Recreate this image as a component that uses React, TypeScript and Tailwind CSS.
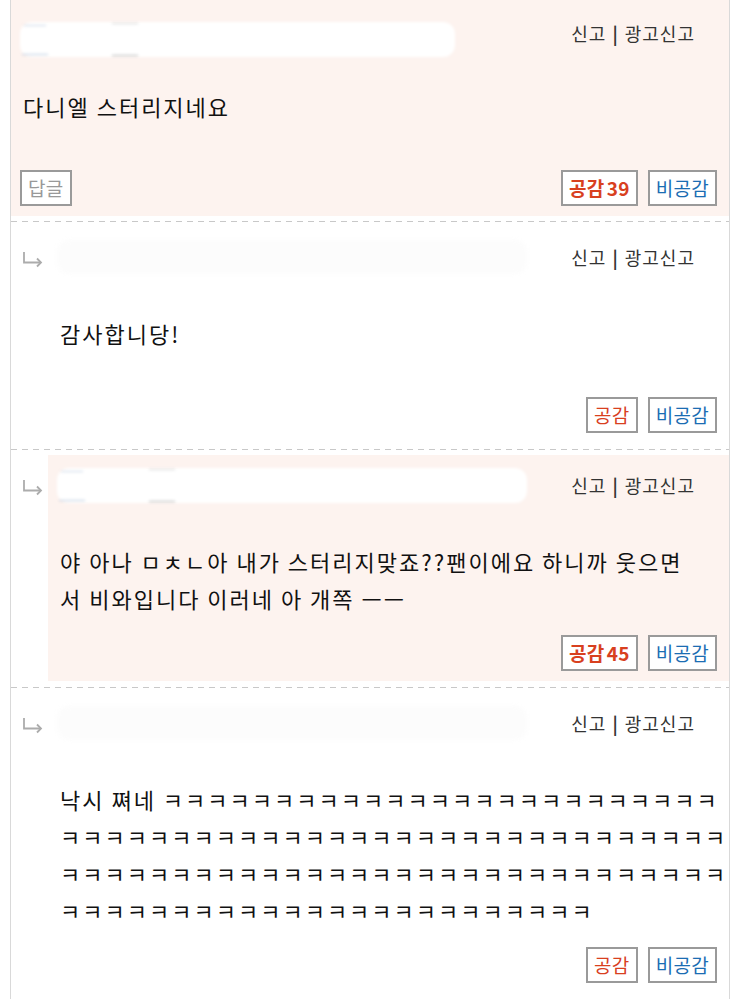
const KK = (n: number) => "ㅋ".repeat(n);

type Comment = {
  reply: boolean;
  hl: boolean;
  lines: string[];
  up?: number;
  blob: "solid" | "faint";
};

const comments: Comment[] = [
  { reply: false, hl: true, lines: ["다니엘 스터리지네요"], up: 39, blob: "solid" },
  { reply: true, hl: false, lines: ["감사합니당!"], blob: "faint" },
  {
    reply: true,
    hl: true,
    lines: ["야 아나 ㅁㅊㄴ아 내가 스터리지맞죠??팬이에요 하니까 웃으면", "서 비와입니다 이러네 아 개쪽 ㅡㅡ"],
    up: 45,
    blob: "solid",
  },
  {
    reply: true,
    hl: false,
    lines: ["낙시 쪄네 " + KK(25), KK(30), KK(30), KK(24)],
    blob: "faint",
  },
];

function ReplyArrow() {
  return (
    <svg width="22" height="17" viewBox="0 0 22 17" fill="none" stroke="#acacac" strokeWidth="1.8">
      <path d="M2 1 V11.5 H19" />
      <path d="M15 7.5 L19 11.5 L15 15.5" />
    </svg>
  );
}

function NameBlob({ kind, width }: { kind: "solid" | "faint"; width: number }) {
  if (kind === "faint") {
    return <div className="h-[34px] rounded-[12px] bg-[#fcfcfc] blur-[2px]" style={{ width }} />;
  }
  return (
    <div className="relative h-[35px] rounded-[12px] bg-white blur-[1.5px]" style={{ width }}>
      <div className="absolute left-[4px] top-[3px] h-px w-[22px] bg-[#c9d6e6]" />
      <div className="absolute left-[2px] bottom-[2px] h-px w-[26px] bg-[#b9c9de]" />
      <div className="absolute left-[92px] top-[1px] h-px w-[26px] bg-[#d4d4d4]" />
      <div className="absolute left-[92px] bottom-[1px] h-px w-[26px] bg-[#b0b0b0]" />
    </div>
  );
}

function Btn({ children, className }: { children: React.ReactNode; className: string }) {
  return (
    <div
      className={`flex h-[36px] items-center justify-center border-2 border-[#9a9a9a] bg-white px-[6px] text-[19px] tracking-[0.3px] ${className}`}
    >
      {children}
    </div>
  );
}

function CommentBox({ c }: { c: Comment }) {
  return (
    <div
      className={`${c.hl ? "bg-[#fdf3ef]" : ""} min-w-0 flex-1 pb-[10px] pl-[9px] pr-[12px] ${c.reply ? "pt-[12px]" : "pt-[17px]"}`}
    >
      <div className={`flex h-[36px] justify-between pr-[22px] ${c.reply ? "items-center" : "items-start"}`}>
        <div className={c.reply ? "" : "mt-[5px]"}>
          <NameBlob kind={c.blob} width={c.reply ? 470 : 435} />
        </div>
        <div className={`text-[18px] tracking-[1px] text-[#333] ${c.reply ? "" : "leading-[32px]"}`}>
          신고 <span className="mx-[1px] font-bold">|</span> 광고신고
        </div>
      </div>
      <div
        className={`${c.reply ? "mt-[40px]" : "mt-[35px]"} min-h-[64px] pl-[3px] text-[22px] leading-[37px] tracking-[2px] text-[#111]`}
      >
        {c.lines.map((l, i) => (
          <div key={i} className="whitespace-nowrap">
            {l}
          </div>
        ))}
      </div>
      <div className="mt-[18px] flex items-center justify-between">
        <div>{!c.reply && <Btn className="text-[#999]">답글</Btn>}</div>
        <div className="flex gap-[10px]">
          <Btn className={c.up ? "font-bold text-[#d8401f]" : "text-[#d8401f]"}>
            공감{c.up ? <span className="ml-[2px]">{c.up}</span> : null}
          </Btn>
          <Btn className="text-[#1b6db3]">비공감</Btn>
        </div>
      </div>
    </div>
  );
}

function Dashed() {
  return <div className="h-px bg-[repeating-linear-gradient(90deg,#c8c8c8_0_6px,transparent_6px_11px)]" />;
}

export default function App() {
  return (
    <div className="min-h-screen bg-white font-['Noto_Sans_CJK_KR','Noto_Sans',sans-serif]">
      <div className="ml-[10px] w-[720px] border-x border-[#d9d9d9]">
        {comments.map((c, i) => (
          <div key={i}>
            <div className={i === 0 ? "pb-[5px]" : "pt-[5px] pb-[6px]"}>
              {c.reply ? (
                <div className="flex">
                  <div className="w-[37px] shrink-0 pl-[11px] pt-[12px]">
                    <div className="flex h-[36px] items-center pt-[4px]">
                      <ReplyArrow />
                    </div>
                  </div>
                  <CommentBox c={c} />
                </div>
              ) : (
                <CommentBox c={c} />
              )}
            </div>
            {i < comments.length - 1 && <Dashed />}
          </div>
        ))}
      </div>
    </div>
  );
}
